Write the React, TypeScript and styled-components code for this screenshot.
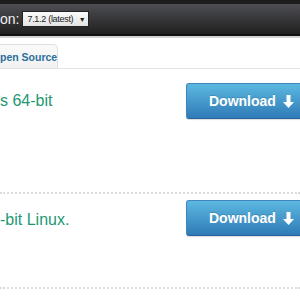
import React from "react";
import styled, { createGlobalStyle } from "styled-components";

const Global = createGlobalStyle`
  html, body { margin: 0; padding: 0; background: #fff; }
  body { width: 300px; height: 300px; overflow: hidden; font-family: "Liberation Sans", Arial, sans-serif; }
`;

const Page = styled.div`
  width: 300px;
  height: 300px;
  overflow: hidden;
  display: flex;
  flex-direction: column;
`;

const Header = styled.div`
  height: 30px;
  border-top: 4px solid #1c1c1c;
  border-bottom: 2px solid #111;
  box-shadow: 0 2px 0 #d4d4d4;
  background: linear-gradient(#4d4e53, #202020);
  display: flex;
  align-items: center;
  gap: 3px;
`;

const Label = styled.span`
  color: #f2f2f2;
  font-size: 14px;
  white-space: nowrap;
`;

const Select = styled.div`
  width: 58px;
  height: 14px;
  border: 1px solid #222;
  background: linear-gradient(#fafafa, #e4e4e4);
  display: flex;
  align-items: center;
  justify-content: space-between;
  padding: 0 3px 0 4px;
  font-size: 9px;
  color: #222;
  letter-spacing: -0.3px;
  white-space: nowrap;
`;

const Caret = styled.span`
  font-size: 7px;
`;

const Tabs = styled.div`
  margin-top: 8px;
  height: 24px;
  border-bottom: 1px solid #e2e2e2;
  display: flex;
`;

const Tab = styled.div`
  width: 58px;
  flex: none;
  border: 1px solid #e0e0e0;
  border-left: none;
  border-bottom: none;
  border-top-right-radius: 5px;
  background: linear-gradient(#fafafa, #f1f1f1);
  display: flex;
  align-items: center;
  box-sizing: border-box;
  font-size: 10.5px;
  font-weight: bold;
  color: #2a6f9c;
  white-space: nowrap;
  padding-left: 0;
  padding-top: 1px;
`;

const Row = styled.div<{ $h: number }>`
  height: ${(p) => p.$h}px;
  display: flex;
  align-items: flex-start;
  justify-content: space-between;
  border-bottom: 2px dotted #dcdcdc;
  box-sizing: border-box;
`;

const Title = styled.div<{ $top: number }>`
  color: #1d9873;
  font-size: 16px;
  margin-top: ${(p) => p.$top}px;
  white-space: nowrap;
`;

const Button = styled.div<{ $top: number }>`
  margin-top: ${(p) => p.$top}px;
  margin-right: -20px;
  width: 134px;
  height: 36px;
  flex: none;
  box-sizing: border-box;
  border-radius: 3px;
  border: 1px solid #3f86bf;
  border-bottom-color: #2a64a0;
  background: linear-gradient(#5cb8e0, #2f7bb7);
  box-shadow: 0 1px 1px rgba(0, 0, 0, 0.15);
  display: flex;
  align-items: center;
  padding-left: 22px;
  gap: 7px;
  color: #fff;
  font-size: 14px;
  font-weight: bold;
  text-shadow: 0 -1px 0 rgba(0, 0, 0, 0.15);
`;

const Arrow = () => (
  <svg width="11" height="13" viewBox="0 0 11 13">
    <path d="M3.5 0h4v7h3.5L5.5 13 0 7h3.5z" fill="#fff" />
  </svg>
);

export default function App() {
  return (
    <Page>
      <Global />
      <Header>
        <Label>on:</Label>
        <Select>
          <span>7.1.2 (latest)</span>
          <Caret>▼</Caret>
        </Select>
      </Header>
      <Tabs>
        <Tab>pen Source</Tab>
      </Tabs>
      <Row $h={125}>
        <Title $top={23}>s 64-bit</Title>
        <Button $top={14}>
          Download <Arrow />
        </Button>
      </Row>
      <Row $h={95}>
        <Title $top={17}>-bit Linux.</Title>
        <Button $top={6}>
          Download <Arrow />
        </Button>
      </Row>
    </Page>
  );
}
